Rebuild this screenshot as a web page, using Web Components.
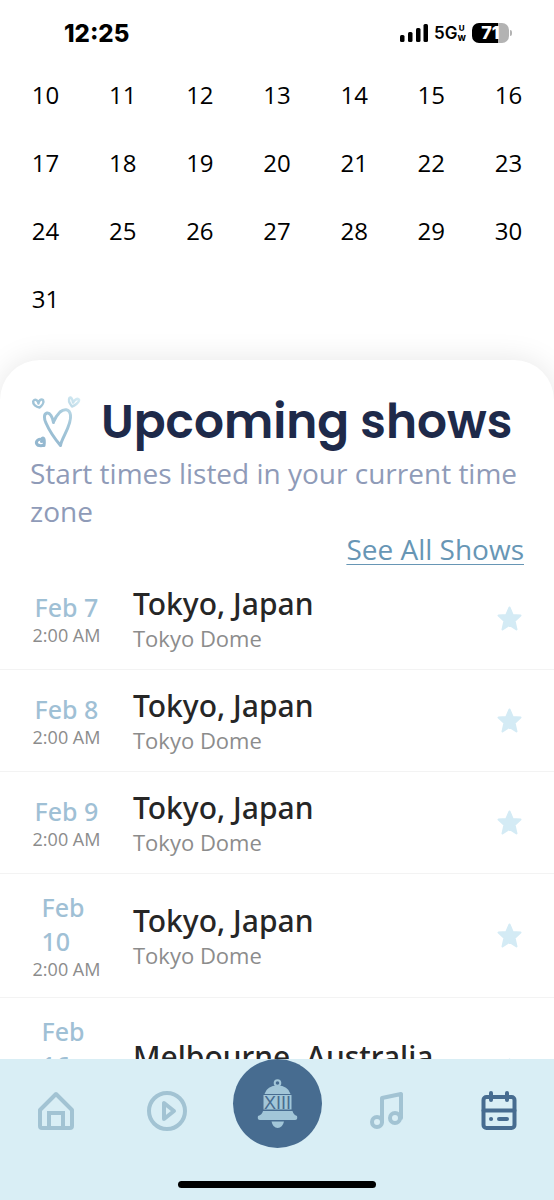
<!DOCTYPE html>
<html lang="en">
<head>
<meta charset="utf-8">
<meta name="viewport" content="width=device-width, initial-scale=1">
<title>Upcoming shows</title>
<style>
  body {
    margin: 0;
    background: #fff;
    font-family: "Open Sans", "Noto Sans", sans-serif;
  }
</style>
</head>
<body>
<tour-app>
  <status-bar slot="status" time="12:25" battery="71"></status-bar>
  <month-days from="10" to="31"></month-days>
  <shows-sheet>
    <span slot="title">Upcoming shows</span>
    <span slot="note">Start times listed in your current time zone</span>
    <show-row date="Feb 7" time="2:00 AM" city="Tokyo, Japan" venue="Tokyo Dome"></show-row>
    <show-row date="Feb 8" time="2:00 AM" city="Tokyo, Japan" venue="Tokyo Dome"></show-row>
    <show-row date="Feb 9" time="2:00 AM" city="Tokyo, Japan" venue="Tokyo Dome"></show-row>
    <show-row date="Feb 10" time="2:00 AM" city="Tokyo, Japan" venue="Tokyo Dome"></show-row>
    <show-row date="Feb 16" time="12:30 AM" city="Melbourne, Australia" venue="Melbourne Cricket Ground"></show-row>
  </shows-sheet>
  <tab-bar slot="tabs"></tab-bar>
</tour-app>

<script>
class TourApp extends HTMLElement {
  constructor() {
    super();
    this.attachShadow({ mode: "open" });
  }

  connectedCallback() {
    this.shadowRoot.innerHTML = `
      <style>
        :host {
          display: flex;
          flex-direction: column;
          height: 100vh;
          overflow: hidden;
        }
        main {
          flex: 1;
          min-height: 0;
          overflow: hidden;
        }
      </style>
      <slot name="status"></slot>
      <main><slot></slot></main>
      <slot name="tabs"></slot>
    `;
  }
}

class StatusBar extends HTMLElement {
  constructor() {
    super();
    this.attachShadow({ mode: "open" });
  }

  connectedCallback() {
    this.render();
  }

  render() {
    this.shadowRoot.innerHTML = `
      <style>
        :host {
          display: flex;
          align-items: center;
          justify-content: space-between;
          box-sizing: border-box;
          height: 60px;
          padding: 6px 42px 0 64px;
          color: #000;
          font-family: Inter, sans-serif;
        }
        .time { font-size: 24px; font-weight: 800; }
        .right { display: flex; align-items: center; gap: 6px; }
        .net { display: flex; align-items: center; font-size: 17px; font-weight: 600; }
        .uw {
          display: grid;
          font-size: 8px;
          line-height: 10px;
          font-weight: 800;
          text-align: center;
        }
        .battery { display: flex; align-items: center; gap: 1px; }
        .level {
          width: 37px;
          height: 20px;
          border-radius: 7px;
          background: linear-gradient(90deg, #000 71%, #b3b3b3 71%);
          color: #fff;
          font-size: 18px;
          font-weight: 800;
          line-height: 20px;
          text-align: center;
        }
        .cap { width: 2px; height: 6px; border-radius: 0 2px 2px 0; background: #b3b3b3; }
      </style>
      <span class="time">${this.getAttribute("time")}</span>
      <div class="right">
        <svg width="28" height="18" viewBox="0 0 28 18" aria-hidden="true">
          <rect x="0" y="11" width="4.500" height="7" rx="1.500"/>
          <rect x="8" y="8" width="4.500" height="10" rx="1.500"/>
          <rect x="16" y="4" width="4.500" height="14" rx="1.500"/>
          <rect x="23.500" y="0" width="4.500" height="18" rx="1.500"/>
        </svg>
        <span class="net">5G<span class="uw"><span>U</span><span>W</span></span></span>
        <span class="battery"><span class="level">${this.getAttribute("battery")}</span><span class="cap"></span></span>
      </div>
    `;
  }
}

class MonthDays extends HTMLElement {
  constructor() {
    super();
    this.attachShadow({ mode: "open" });
  }

  connectedCallback() {
    this.render();
  }

  render() {
    const from = Number(this.getAttribute("from"));
    const to = Number(this.getAttribute("to"));
    let days = "";
    for (let day = from; day <= to; day++) {
      days += `<button type="button">${day}</button>`;
    }

    this.shadowRoot.innerHTML = `
      <style>
        :host {
          display: grid;
          grid-template-columns: repeat(7, 1fr);
          grid-auto-rows: 68px;
          padding: 0 7px;
        }
        button {
          padding: 0;
          border: 0;
          background: none;
          color: #000;
          font: inherit;
          font-size: 24px;
        }
      </style>
      ${days}
    `;
  }
}

class ShowsSheet extends HTMLElement {
  constructor() {
    super();
    this.attachShadow({ mode: "open" });
  }

  connectedCallback() {
    this.render();
  }

  render() {
    this.shadowRoot.innerHTML = `
      <style>
        :host {
          display: block;
          margin-top: 28px;
          padding-top: 30px;
          border-radius: 40px 40px 0 0;
          background: #fff;
          box-shadow: 0 0 30px rgba(0, 0, 0, 0.1);
        }
        header { padding: 0 30px; }
        .heading { display: flex; align-items: center; gap: 19px; height: 64px; }
        .heading svg { flex: none; }
        h2 {
          margin: 0;
          color: #1e2a4a;
          font-family: Poppins, Inter, sans-serif;
          font-size: 47px;
          font-weight: 600;
          line-height: 62px;
          white-space: nowrap;
        }
        p {
          margin: 0;
          color: #8f9bb8;
          font-size: 28px;
          line-height: 38px;
        }
        a {
          display: block;
          width: fit-content;
          margin-left: auto;
          color: #6796b5;
          font-size: 28px;
          line-height: 38px;
          text-decoration-thickness: 1px;
          text-underline-offset: 4px;
        }
      </style>
      <header>
        <div class="heading">
          <svg width="52" height="54" viewBox="0 0 52 54" fill="none" stroke="url(#fade)" stroke-linecap="round" stroke-linejoin="round" aria-hidden="true">
            <defs>
              <linearGradient id="fade" gradientUnits="userSpaceOnUse" x1="8" y1="46" x2="48" y2="4">
                <stop offset="0" stop-color="#93b7cf"/>
                <stop offset="0.6" stop-color="#a5c8da"/>
                <stop offset="1" stop-color="#d3eaf3"/>
              </linearGradient>
            </defs>
            <path stroke-width="3" d="M23.500 27.500C22.500 22 20 17.500 17 18C13.500 19 14 24 16 28C19 35 25 44 30.500 50.500C31.500 43 42 30 40.500 20C39.500 13.500 34 13.500 30 17C27 20 25 23 23.500 27"/>
            <path stroke-width="2.500" d="M8.500 8.500C8 4.500 4 3.500 3.200 6.500C2.800 9.500 6 12 9.500 12.500C11.500 11 14.500 7.500 13 5C11 3.500 9 5.500 8.500 8"/>
            <path stroke-width="2.500" d="M43 7.500C42.500 4 41 1.500 39.500 3C38 5.500 40 9 42 11.500C44.500 10.500 49.500 7.500 49 4.800C47.500 2.500 44.500 5 43 7.500"/>
            <path stroke-width="3" d="M11.500 44.500C8 43.500 5.500 46.500 6.800 49C8 51.500 11.500 50.500 14 50.500C14.300 48 14.800 45 13.800 43.500C12.800 42.500 11.500 43 11.500 46.500"/>
          </svg>
          <h2><slot name="title"></slot></h2>
        </div>
        <p><slot name="note"></slot></p>
        <a href="#shows">See All Shows</a>
      </header>
      <slot></slot>
    `;
  }
}

class ShowRow extends HTMLElement {
  constructor() {
    super();
    this.attachShadow({ mode: "open" });
  }

  connectedCallback() {
    this.render();
    this.setupEventListeners();
  }

  setupEventListeners() {
    const star = this.shadowRoot.querySelector("button");
    star.addEventListener("click", () => {
      const pressed = star.getAttribute("aria-pressed") === "true";
      star.setAttribute("aria-pressed", String(!pressed));
    });
  }

  render() {
    const date = this.getAttribute("date");
    // two-digit days do not fit on one line
    const stacked = date.length > 5 ? "stacked" : "";

    this.shadowRoot.innerHTML = `
      <style>
        :host {
          display: flex;
          align-items: center;
          padding: 16px 32px;
          border-bottom: 1px solid #f3f3f3;
        }
        .when {
          display: flex;
          flex: none;
          flex-direction: column;
          align-items: center;
          width: 69px;
          margin-right: 32px;
        }
        .date {
          color: #9fc0d5;
          font-family: "Noto Sans", sans-serif;
          font-size: 25px;
          font-weight: 500;
          line-height: 34px;
        }
        .date.stacked { width: 50px; }
        .time {
          color: #8c8c8c;
          font-size: 18px;
          line-height: 23px;
          text-align: center;
        }
        .where { flex: 1; min-width: 0; }
        h3 {
          margin: 0;
          color: #262626;
          font-family: "Noto Sans", sans-serif;
          font-size: 30px;
          font-weight: 500;
          line-height: 40px;
        }
        .venue {
          color: #8c8c8c;
          font-size: 22px;
          line-height: 29px;
        }
        button {
          display: flex;
          padding: 0;
          border: 0;
          background: none;
          color: #d4ebf5;
        }
        button[aria-pressed="true"] { color: #476c90; }
      </style>
      <div class="when">
        <span class="date ${stacked}">${date}</span>
        <span class="time">${this.getAttribute("time")}</span>
      </div>
      <div class="where">
        <h3>${this.getAttribute("city")}</h3>
        <div class="venue">${this.getAttribute("venue")}</div>
      </div>
      <button type="button" aria-pressed="false" aria-label="Save show">
        <svg width="26" height="26" viewBox="0 0 26 26" fill="currentColor" stroke="currentColor" stroke-width="2" stroke-linejoin="round">
          <path d="M13.500 1.500L16.700 9L24.500 9.600L18.600 15L20.500 23.500L13.500 19L6.500 23.500L8.400 15L2.500 9.600L10.300 9Z"/>
        </svg>
      </button>
    `;
  }
}

class TabBar extends HTMLElement {
  constructor() {
    super();
    this.attachShadow({ mode: "open" });
  }

  connectedCallback() {
    this.render();
  }

  render() {
    this.shadowRoot.innerHTML = `
      <style>
        :host {
          display: flex;
          flex: none;
          flex-direction: column;
          align-items: center;
          background: #d9eef5;
        }
        nav {
          display: grid;
          grid-template-columns: repeat(5, 1fr);
          align-items: center;
          justify-items: center;
          width: 100%;
          height: 104px;
        }
        a { display: flex; color: #a2c3d3; }
        a.current { color: #476c90; }
        a.bell { align-self: start; }
        .line { fill: none; stroke: currentColor; stroke-width: 4; stroke-linecap: round; stroke-linejoin: round; }
        .home {
          width: 198px;
          height: 7px;
          margin: 18px 0 12px;
          border-radius: 4px;
          background: #000;
        }
      </style>
      <nav>
        <a href="#home" aria-label="Home">
          <svg class="line" width="40" height="40" viewBox="0 0 40 40">
            <path d="M21 3L5 19V35Q5 37 7 37H35Q37 37 37 35V19Z"/>
            <path d="M14 37V22H28V37" stroke-linejoin="miter"/>
          </svg>
        </a>
        <a href="#videos" aria-label="Videos">
          <svg class="line" width="42" height="42" viewBox="0 0 42 42">
            <circle cx="22" cy="21" r="18"/>
            <path d="M19 13V29L29 21Z"/>
          </svg>
        </a>
        <a class="bell" href="#alerts" aria-label="Alerts">
          <svg width="90" height="89" viewBox="0 0 90 89">
            <circle cx="45.500" cy="44.500" r="44.500" fill="#476c90"/>
            <g fill="#a2c6d8">
              <circle cx="45.500" cy="24" r="2.800" fill="none" stroke="#a2c6d8" stroke-width="2"/>
              <path d="M32.500 35Q35 26.500 45.500 26.500T58.500 35Z"/>
              <rect x="31.500" y="36" width="28" height="14.500"/>
              <path d="M31 52H60.500Q61.500 56 65 57Q66 61 63 61H28Q25 61 26 57Q30 56 31 52Z"/>
              <path d="M39.500 62.500H52Q50.500 69 45.700 69T39.500 62.500Z"/>
            </g>
            <text x="45.500" y="50" text-anchor="middle" font-family="Liberation Sans, sans-serif" font-size="18" fill="#476c90">XIII</text>
          </svg>
        </a>
        <a href="#music" aria-label="Music">
          <svg class="line" width="36" height="40" viewBox="0 0 36 40">
            <path d="M12 31V7L31 3V27"/>
            <circle cx="7" cy="31" r="5"/>
            <circle cx="25" cy="27" r="5"/>
          </svg>
        </a>
        <a class="current" href="#calendar" aria-label="Calendar" aria-current="page">
          <svg class="line" width="40" height="40" viewBox="0 0 40 40">
            <rect x="4.500" y="6" width="31" height="31" rx="3"/>
            <path d="M12 2V9M28 2V9M4.500 19.500H35.500M12 28H12.100M20 28H28"/>
          </svg>
        </a>
      </nav>
      <div class="home"></div>
    `;
  }
}

customElements.define("tour-app", TourApp);
customElements.define("status-bar", StatusBar);
customElements.define("month-days", MonthDays);
customElements.define("shows-sheet", ShowsSheet);
customElements.define("show-row", ShowRow);
customElements.define("tab-bar", TabBar);
</script>
</body>
</html>
